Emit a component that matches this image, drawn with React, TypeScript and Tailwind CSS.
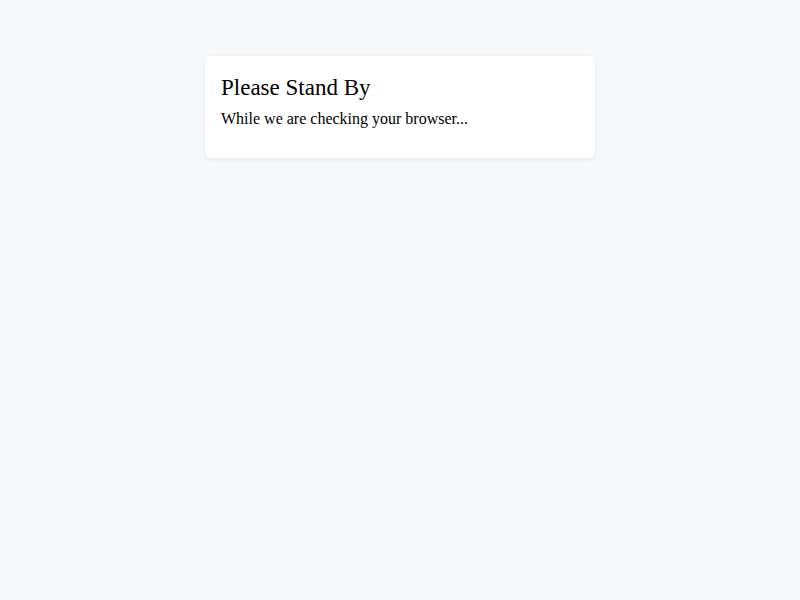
export default function App() {
  return (
    <div className="min-h-screen w-full bg-[#f7f8fa] font-['Liberation_Serif',serif] text-black">
      <div className="flex justify-center pt-14">
        <div className="w-[390px] rounded-md bg-white px-4 pt-[18px] pb-4 shadow-[0_1px_4px_rgba(0,0,0,0.08)]">
          <h1 className="mb-2 text-[23px] leading-[28px]">Please Stand By</h1>
          <p className="mb-[14px] text-base leading-[1.15]">While we are checking your browser...</p>
        </div>
      </div>
    </div>
  );
}
